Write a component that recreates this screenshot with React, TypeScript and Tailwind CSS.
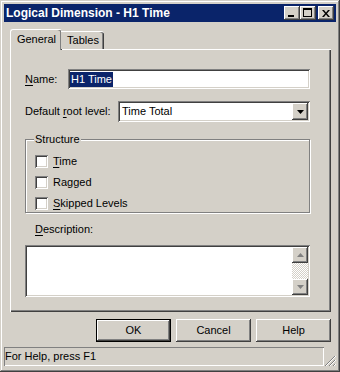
import React from "react";

const raised =
  "shadow-[inset_-1px_-1px_#404040,inset_1px_1px_#fff,inset_-2px_-2px_#808080,inset_2px_2px_#d4d0c8] bg-[#d4d0c8]";
const sunken =
  "shadow-[inset_1px_1px_#808080,inset_-1px_-1px_#fff,inset_2px_2px_#404040,inset_-2px_-2px_#d4d0c8] bg-white";

function U({ children }: { children: React.ReactNode }) {
  return <span className="underline underline-offset-[2px] decoration-1">{children}</span>;
}

function Checkbox({ label }: { label: React.ReactNode }) {
  return (
    <div className="flex items-center h-[13px]">
      <div className={`w-[13px] h-[13px] ${sunken}`} />
      <span className="ml-[5px] leading-[13px]">{label}</span>
    </div>
  );
}

function Arrow({ dir, color = "#000" }: { dir: "up" | "down"; color?: string }) {
  return (
    <svg width="7" height="4" viewBox="0 0 7 4">
      {dir === "down" ? (
        <polygon points="0,0 7,0 3.5,4" fill={color} />
      ) : (
        <polygon points="0,4 7,4 3.5,0" fill={color} />
      )}
    </svg>
  );
}

export default function App() {
  return (
    <div className="w-[340px] h-[372px] bg-[#d4d0c8] p-[4px] flex flex-col text-[11px] text-black font-['Liberation_Sans',Arial,sans-serif] shadow-[inset_-1px_-1px_#404040,inset_1px_1px_#d4d0c8,inset_-2px_-2px_#808080,inset_2px_2px_#fff] select-none">
      {/* Title bar */}
      <div className="h-[18px] bg-[#0a246a] flex items-center pl-[2px] pr-[2px]">
        <span className="text-white font-bold text-[12px] leading-[18px]">
          Logical Dimension - H1 Time
        </span>
        <div className="ml-auto flex items-center">
          <div className={`w-[16px] h-[14px] ${raised} flex items-end justify-start pl-[4px] pb-[3px]`}>
            <div className="w-[6px] h-[2px] bg-black" />
          </div>
          <div className={`w-[16px] h-[14px] ${raised} flex items-start pl-[3px] pt-[2px]`}>
            <div className="w-[9px] h-[9px] border border-black border-t-2" />
          </div>
          <div className={`ml-[2px] w-[16px] h-[14px] ${raised} flex items-center justify-center`}>
            <svg width="8" height="7" viewBox="0 0 8 7">
              <path d="M0 0h2l2 2.5L6 0h2L5 3.5 8 7H6L4 4.5 2 7H0l3-3.5z" fill="#000" />
            </svg>
          </div>
        </div>
      </div>

      {/* Tabs */}
      <div className="mt-[8px] ml-[6px] flex items-end h-[20px] relative z-10 -mb-[1px]">
        <div className="w-[52px] h-[21px] bg-[#d4d0c8] border-l border-t border-white rounded-tl-[3px] rounded-tr-[3px] shadow-[inset_-1px_0_#404040,inset_-2px_0_#808080] flex items-center justify-center pb-[2px]">
          General
        </div>
        <div className="w-[43px] h-[18px] mb-[1px] -ml-[1px] bg-[#d4d0c8] border-t border-white rounded-tr-[3px] shadow-[inset_-1px_0_#404040,inset_-2px_0_#808080] flex items-center justify-center pl-[1px]">
          Tables
        </div>
      </div>

      {/* Panel */}
      <div className="ml-[6px] w-[321px] h-[263px] flex flex-col pl-[15px] pt-[20px] shadow-[inset_1px_1px_#fff,inset_-1px_-1px_#404040,inset_-2px_-2px_#808080]">
        {/* Name */}
        <div className="flex items-center h-[20px]">
          <span className="w-[43px]">
            <U>N</U>ame:
          </span>
          <div className={`w-[242px] h-[20px] ${sunken} flex items-center pl-[2px]`}>
            <span className="bg-[#0a246a] text-white px-[1px] leading-[15px]">H1 Time</span>
          </div>
        </div>

        {/* Default root level */}
        <div className="flex items-center h-[21px] mt-[12px]">
          <span className="w-[93px]">
            Default <U>r</U>oot level:
          </span>
          <div className={`w-[192px] h-[21px] ${sunken} flex items-center p-[2px]`}>
            <span className="flex-1 pl-[2px]">Time Total</span>
            <div className={`w-[16px] h-[17px] ${raised} flex items-center justify-center`}>
              <Arrow dir="down" />
            </div>
          </div>
        </div>

        {/* Structure group */}
        <div className="relative mt-[17px] w-[285px] h-[74px] border border-[#808080] shadow-[inset_1px_1px_#fff,1px_1px_#fff] pl-[9px] pt-[15px] flex flex-col gap-[8px]">
          <span className="absolute -top-[7px] left-[8px] px-[1px] bg-[#d4d0c8] leading-[13px]">
            Structure
          </span>
          <Checkbox label={<><U>T</U>ime</>} />
          <Checkbox label="Ragged" />
          <Checkbox label={<><U>S</U>kipped Levels</>} />
        </div>

        {/* Description */}
        <div className="mt-[10px] pl-[10px] h-[13px] leading-[13px]">
          <U>D</U>escription:
        </div>
        <div className={`mt-[9px] w-[285px] h-[52px] ${sunken} p-[2px] flex justify-end`}>
          <div className="w-[16px] h-full flex flex-col">
            <div className={`w-[16px] h-[16px] ${raised} flex items-center justify-center`}>
              <Arrow dir="up" color="#808080" />
            </div>
            <div className="flex-1 bg-[repeating-conic-gradient(#fff_0_25%,#d4d0c8_0_50%)] bg-[length:2px_2px]" />
            <div className={`w-[16px] h-[16px] ${raised} flex items-center justify-center`}>
              <Arrow dir="down" color="#808080" />
            </div>
          </div>
        </div>
      </div>

      {/* Buttons */}
      <div className="mt-[7px] h-[23px] flex justify-end gap-[5px] pr-[5px]">
        <div className="w-[75px] h-[23px] bg-[#d4d0c8] shadow-[inset_0_0_0_1px_#000,inset_-2px_-2px_#404040,inset_2px_2px_#fff,inset_-3px_-3px_#808080] flex items-center justify-center">
          OK
        </div>
        <div className={`w-[75px] h-[23px] ${raised} flex items-center justify-center`}>Cancel</div>
        <div className={`w-[75px] h-[23px] ${raised} flex items-center justify-center`}>Help</div>
      </div>

      {/* Status bar */}
      <div className="mt-[5px] flex h-[20px]">
        <div className="w-[322px] h-[19px] shadow-[inset_1px_1px_#808080,inset_-1px_-1px_#fff] flex items-center pl-[1px]">
          For Help, press F1
        </div>
        <div className="flex-1 flex items-end justify-end">
          <svg width="12" height="12" viewBox="0 0 12 12">
            <path d="M11 1L1 11M11 5L5 11M11 9L9 11" stroke="#808080" strokeWidth="1" />
            <path d="M12 1L2 11M12 5L6 11M12 9L10 11" stroke="#fff" strokeWidth="1" />
          </svg>
        </div>
      </div>
    </div>
  );
}
